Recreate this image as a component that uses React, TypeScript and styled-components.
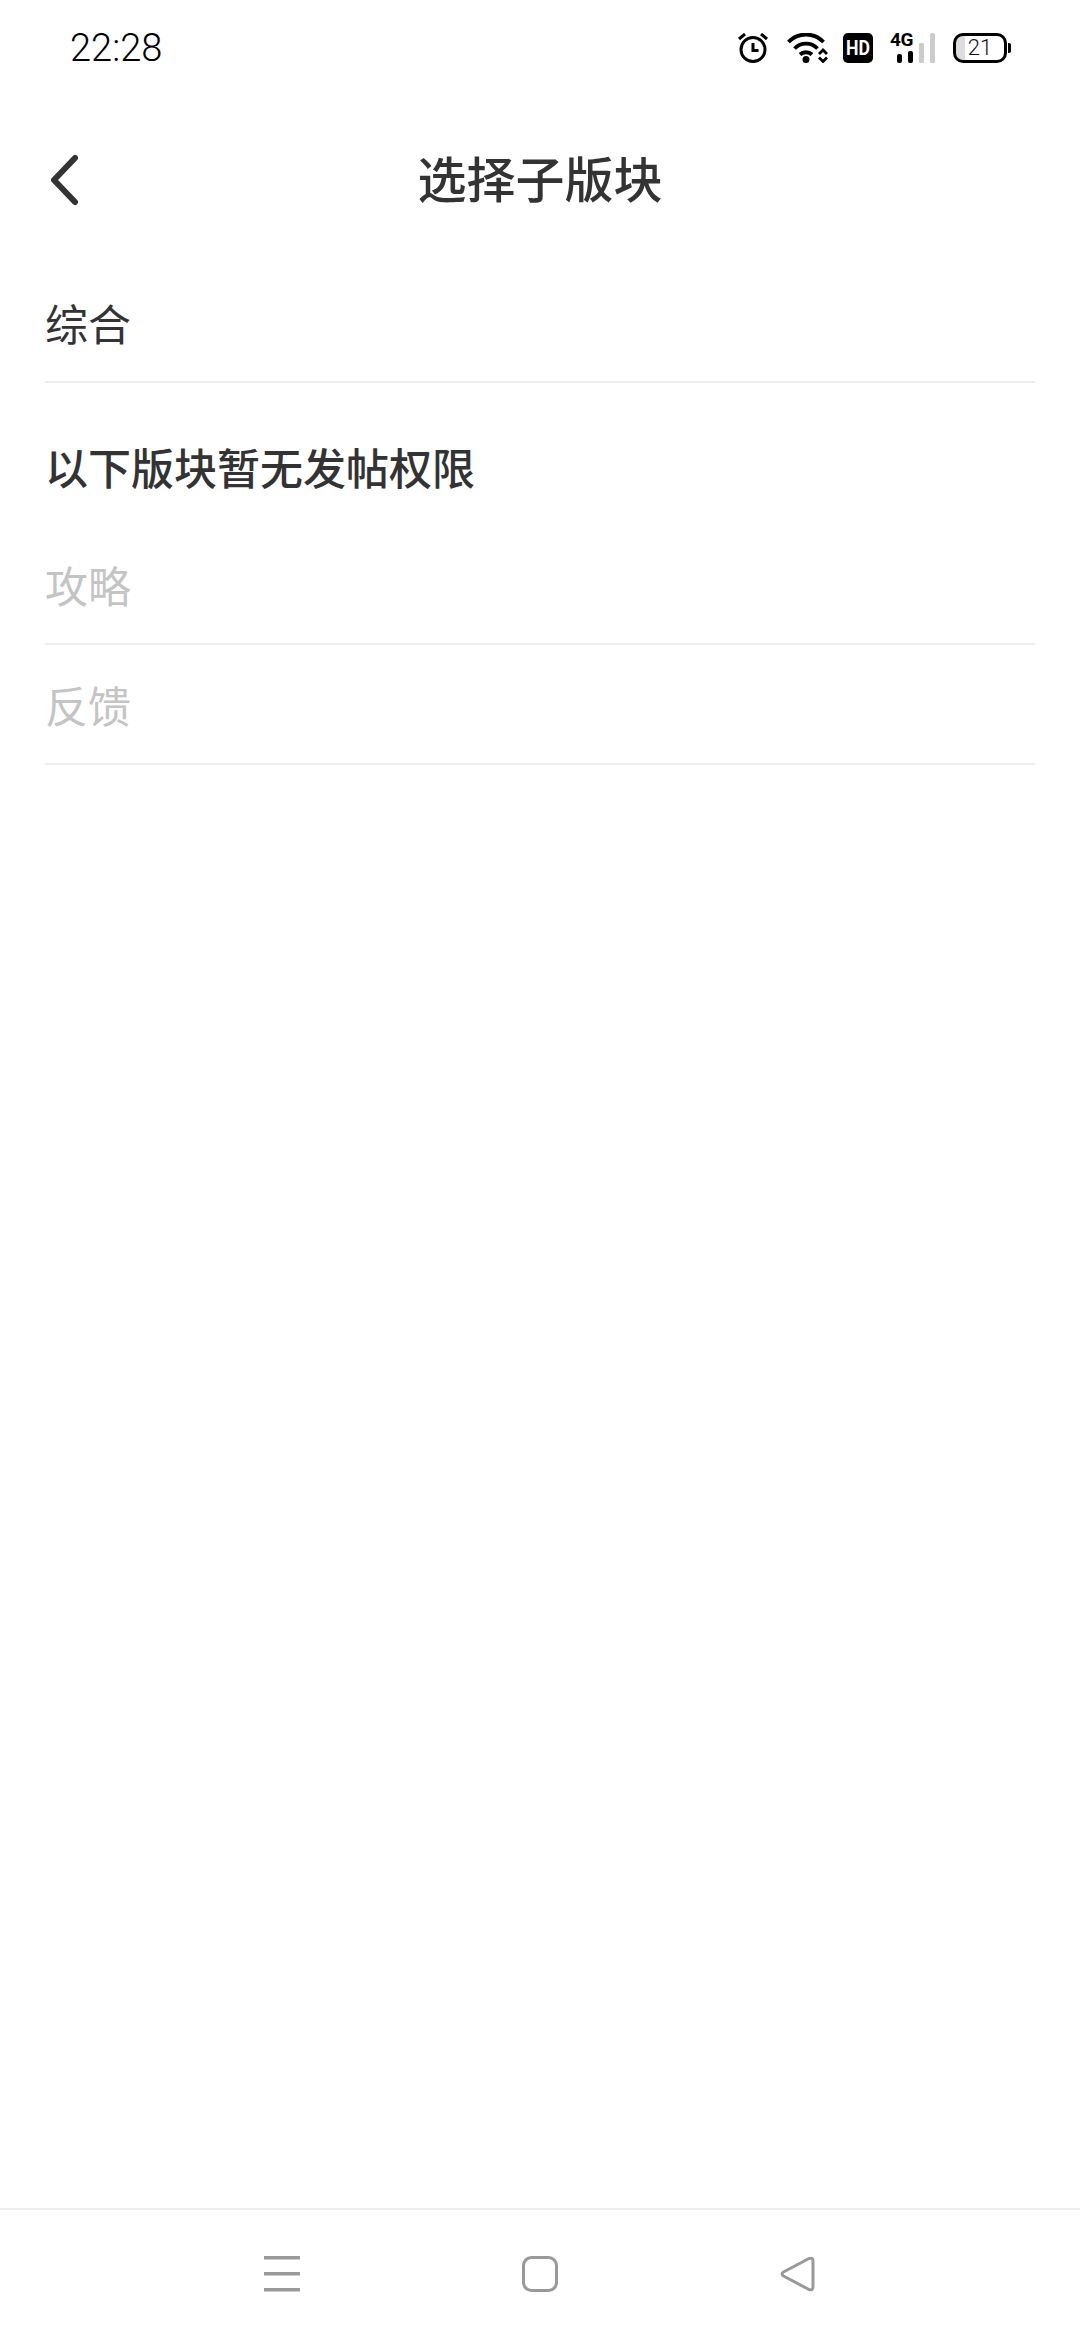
import { createGlobalStyle } from "styled-components";
import styled from "styled-components";

const GlobalStyle = createGlobalStyle`
  html, body {
    margin: 0;
    padding: 0;
    background: #fff;
  }
  * {
    box-sizing: border-box;
  }
`;

const cjk = `"Noto Sans CJK SC", "Noto Sans", sans-serif`;

const Page = styled.div`
  width: 1080px;
  height: 2340px;
  display: flex;
  flex-direction: column;
  background: #fff;
  font-family: ${cjk};
  color: #333;
  overflow: hidden;
`;

const StatusBar = styled.div`
  height: 96px;
  padding: 0 69px 0 70px;
  display: flex;
  align-items: center;
  justify-content: space-between;
`;

const Time = styled.span`
  font-family: Roboto, sans-serif;
  font-size: 38px;
  font-weight: 300;
  line-height: 1;
  color: #000;
`;

const StatusIcons = styled.div`
  display: flex;
  align-items: center;
`;

const StatusIcon = styled.svg<{ $gap?: number }>`
  display: block;
  height: 30px;
  margin-left: ${(p) => p.$gap ?? 0}px;
`;

const Signal = styled.div`
  position: relative;
  width: 45px;
  height: 30px;
  margin-left: 18px;
`;

const NetworkLabel = styled.span`
  position: absolute;
  left: -1px;
  top: 0;
  font-family: Roboto, sans-serif;
  font-size: 19px;
  font-weight: 700;
  line-height: 14px;
  letter-spacing: -0.5px;
  color: #000;
`;

const Battery = styled.div`
  position: relative;
  width: 54px;
  height: 30px;
  margin-left: 17px;
  margin-right: 4px;
  border: 3px solid #000;
  border-radius: 10px;
  display: flex;
  align-items: center;
  justify-content: center;
  font-family: Roboto, sans-serif;
  font-weight: 300;
  font-size: 22px;
  line-height: 1;
  color: #111;
  background: linear-gradient(to right, #ddd 9px, #fff 9px);

  &::after {
    content: "";
    position: absolute;
    right: -7px;
    top: 7px;
    width: 3px;
    height: 10px;
    border-radius: 0 2px 2px 0;
    background: #000;
  }
`;

const Header = styled.div`
  height: 167px;
  padding: 0 45px 7px;
  display: grid;
  grid-template-columns: 1fr auto 1fr;
  align-items: center;
`;

const BackIcon = styled.svg`
  display: block;
  width: 36px;
  height: 52px;
  margin-top: 7px;
`;

const Title = styled.h1`
  margin: 0;
  font-size: 49px;
  font-weight: 500;
  line-height: 1;
  color: #333;
`;

const List = styled.div`
  padding: 0 45px;
`;

const Row = styled.div<{ $disabled?: boolean }>`
  height: 120px;
  display: flex;
  align-items: center;
  border-bottom: 2px solid #eee;
  font-size: 43px;
  line-height: 1;
  color: ${(p) => (p.$disabled ? "#c4c4c4" : "#333")};
`;

const SectionTitle = styled.div`
  height: 142px;
  padding-top: 24px;
  display: flex;
  align-items: center;
  font-size: 43px;
  font-weight: 500;
  line-height: 1;
  color: #333;
`;

const Spacer = styled.div`
  flex: 1;
`;

const NavBar = styled.div`
  height: 132px;
  border-top: 2px solid #eee;
  padding-bottom: 2px;
  display: flex;
  align-items: center;
  justify-content: center;
  gap: 222px;
`;

const NavIcon = styled.svg`
  display: block;
  width: 36px;
  height: 36px;
  color: #999;
`;

export default function App() {
  return (
    <>
      <GlobalStyle />
      <Page>
        <StatusBar>
          <Time>22:28</Time>
          <StatusIcons>
            <StatusIcon viewBox="0 0 30 30" width="30" fill="none" stroke="#000" strokeWidth="3">
              <circle cx="15" cy="16.500" r="12" />
              <path d="M15 10v7.500h5.500" />
              <path d="M1 6l6-5M29 6l-6-5" />
            </StatusIcon>
            <StatusIcon $gap={19} viewBox="0 0 41 30" width="41">
              <path d="M1.500 9C11 -1 27 -1 36.500 9M7.500 15.500c6.500-6.500 16.500-6.500 23 0M13 21.500c3.200-3 8.800-3 12 0" fill="none" stroke="#000" strokeWidth="3.800" />
              <circle cx="19" cy="26.500" r="3.500" fill="#000" />
              <path d="M32 21l4-4 4 4M32 24.500l4 4 4-4" fill="none" stroke="#000" strokeWidth="2.800" />
            </StatusIcon>
            <StatusIcon $gap={15} viewBox="0 0 30 30" width="30">
              <rect width="30" height="30" rx="5" fill="#000" />
              <text x="15" y="22" textAnchor="middle" fontFamily="Roboto, sans-serif" fontWeight="700" fontSize="20" fill="#fff" textLength="24" lengthAdjust="spacingAndGlyphs">HD</text>
            </StatusIcon>
            <Signal>
              <NetworkLabel>4G</NetworkLabel>
              <StatusIcon viewBox="0 0 45 30" width="45">
                <rect x="6" y="21" width="5" height="9" rx="2" fill="#000" />
                <rect x="17" y="18" width="5" height="12" rx="2" fill="#000" />
                <rect x="28" y="10" width="5" height="20" rx="1.500" fill="#ccc" />
                <rect x="39" y="0" width="5" height="30" rx="1.500" fill="#ccc" />
              </StatusIcon>
            </Signal>
            <Battery>21</Battery>
          </StatusIcons>
        </StatusBar>

        <Header>
          <BackIcon viewBox="0 0 36 52" fill="none" stroke="#333" strokeWidth="6" strokeLinecap="round" strokeLinejoin="round">
            <path d="M30 4 9 26l21 22" />
          </BackIcon>
          <Title>选择子版块</Title>
        </Header>

        <List>
          <Row>综合</Row>
          <SectionTitle>以下版块暂无发帖权限</SectionTitle>
          <Row $disabled>攻略</Row>
          <Row $disabled>反馈</Row>
        </List>

        <Spacer />

        <NavBar>
          <NavIcon viewBox="0 0 36 36" fill="currentColor">
            <rect x="0" y="0" width="36" height="3.500" />
            <rect x="0" y="16" width="36" height="3.500" />
            <rect x="0" y="32" width="36" height="3.500" />
          </NavIcon>
          <NavIcon viewBox="0 0 36 36" fill="none" stroke="currentColor" strokeWidth="3">
            <rect x="1.500" y="1.500" width="33" height="33" rx="8" />
          </NavIcon>
          <NavIcon viewBox="0 0 36 36" fill="none" stroke="currentColor" strokeWidth="3" strokeLinejoin="round">
            <path d="M28.500 2.700Q33 1 33 5L33 31Q33 35 28.500 33.300L3.500 20Q.5 18 3.500 16Z" />
          </NavIcon>
        </NavBar>
      </Page>
    </>
  );
}
